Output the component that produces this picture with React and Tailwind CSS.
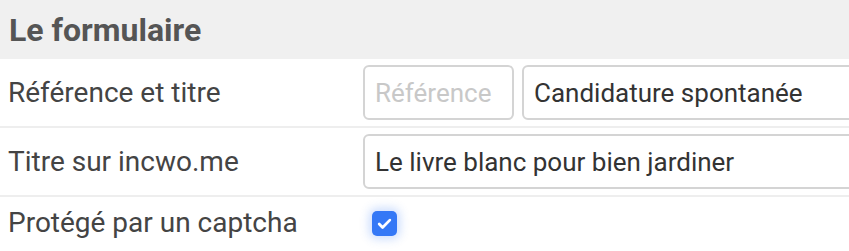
import React, { useState } from "react";

const Row = ({ label, children, last }) => (
  <div className={`flex items-center ${last ? "h-[52px]" : "py-[6px] border-b-2 border-[#eeeeee]"}`}>
    <div className="w-[363px] pl-[8px] text-[28px] text-[#444444] shrink-0">{label}</div>
    <div className="flex items-center gap-[8px] flex-1">{children}</div>
  </div>
);

export default function App() {
  const [checked, setChecked] = useState(true);

  return (
    <div className="w-[849px] overflow-hidden bg-white" style={{ fontFamily: "Roboto, 'Liberation Sans', sans-serif" }}>
      <div className="h-[59px] bg-[#f0f0f0] flex items-center pl-[9px]">
        <h2 className="text-[32px] font-bold text-[#555555]">Le formulaire</h2>
      </div>

      <Row label="Référence et titre">
        <input
          type="text"
          placeholder="Référence"
          className="w-[151px] h-[55px] px-[10px] border-2 border-[#d4d4d4] rounded-[6px] text-[26px] text-[#333333] placeholder:text-[#c8c8c8] outline-none shrink-0"
        />
        <input
          type="text"
          defaultValue="Candidature spontanée"
          className="w-[400px] h-[55px] px-[10px] border-2 border-[#d4d4d4] rounded-[6px] text-[26px] text-[#333333] outline-none shrink-0"
        />
      </Row>

      <Row label="Titre sur incwo.me">
        <input
          type="text"
          defaultValue="Le livre blanc pour bien jardiner"
          className="w-[560px] h-[55px] px-[10px] border-2 border-[#d4d4d4] rounded-[6px] text-[26px] text-[#333333] outline-none shrink-0"
        />
      </Row>

      <Row label="Protégé par un captcha" last>
        <button
          type="button"
          onClick={() => setChecked(!checked)}
          className={`ml-[9px] w-[25px] h-[25px] rounded-[5px] flex items-center justify-center ${checked ? "bg-[#3478f6] shadow-[0_0_10px_3px_rgba(52,120,246,0.25)]" : "bg-white border-2 border-[#bbbbbb]"}`}
        >
          {checked && (
            <svg width="17" height="17" viewBox="0 0 16 16" fill="none">
              <path d="M3 8.5l3.2 3.2L13 4.8" stroke="white" strokeWidth="2.6" strokeLinecap="round" strokeLinejoin="round" />
            </svg>
          )}
        </button>
      </Row>
    </div>
  );
}
